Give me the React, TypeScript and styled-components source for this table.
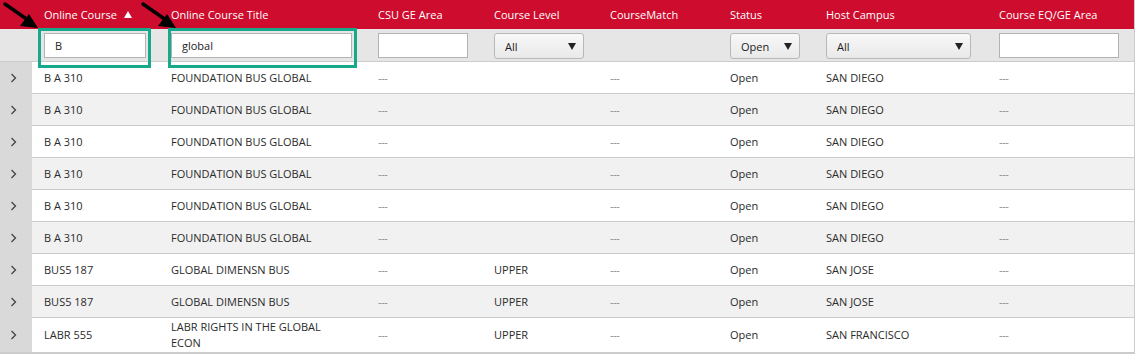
import React from 'react';
import styled, { createGlobalStyle } from 'styled-components';

const GlobalStyle = createGlobalStyle`
  body {
    margin: 0;
    background: #ffffff;
    font-family: 'Open Sans', 'Liberation Sans', Arial, sans-serif;
  }
`;

const colors = {
  red: '#ce0c2e',
  white: '#ffffff',
  text: '#2b2b2b',
  gutter: '#d9d9d9',
  filterBg: '#e6e6e6',
  stripe: '#f1f1f1',
  line: '#cccccc',
  green: '#18a98c',
};

const COLUMNS = '32px 127px 207px 116px 116px 120px 96px 173px 147px';

type Course = {
  code: string;
  title: string;
  geArea: string;
  level: string;
  match: string;
  status: string;
  campus: string;
  eq: string;
};

const courses: Course[] = [
  ...Array.from({ length: 6 }, () => ({
    code: 'B A 310',
    title: 'FOUNDATION BUS GLOBAL',
    geArea: '---',
    level: '',
    match: '---',
    status: 'Open',
    campus: 'SAN DIEGO',
    eq: '---',
  })),
  ...Array.from({ length: 2 }, () => ({
    code: 'BUS5 187',
    title: 'GLOBAL DIMENSN BUS',
    geArea: '---',
    level: 'UPPER',
    match: '---',
    status: 'Open',
    campus: 'SAN JOSE',
    eq: '---',
  })),
  {
    code: 'LABR 555',
    title: 'LABR RIGHTS IN THE GLOBAL ECON',
    geArea: '---',
    level: 'UPPER',
    match: '---',
    status: 'Open',
    campus: 'SAN FRANCISCO',
    eq: '---',
  },
];

const Page = styled.div`
  position: relative;
  width: 1135px;
`;

const Table = styled.div`
  width: 1134px;
  border-right: 1px solid ${colors.line};
  border-bottom: 2px solid ${colors.line};
  font-size: 11px;
  color: ${colors.text};
`;

const HeaderRow = styled.div`
  display: grid;
  grid-template-columns: ${COLUMNS};
  height: 29px;
  background: ${colors.red};
  color: ${colors.white};
  align-items: center;
`;

const HeaderCell = styled.div`
  padding-left: 12px;
  padding-bottom: 1px;
  white-space: nowrap;
  display: flex;
  align-items: center;
  gap: 7px;
`;

const FilterRow = styled.div`
  display: grid;
  grid-template-columns: ${COLUMNS};
  height: 32px;
  background: ${colors.filterBg};
  border-bottom: 1px solid ${colors.line};
  align-items: center;
`;

const FilterCell = styled.div`
  padding-left: 12px;
  display: flex;
  align-items: center;
`;

const TextInput = styled.div<{ $width: number }>`
  box-sizing: border-box;
  width: ${(p) => p.$width}px;
  height: 25px;
  margin-top: 1px;
  background: ${colors.white};
  border: 1px solid #b3b3b3;
  padding-left: 10px;
  display: flex;
  align-items: center;
  font-size: 11px;
  color: #222;
`;

const Select = styled.div<{ $width: number }>`
  box-sizing: border-box;
  width: ${(p) => p.$width}px;
  height: 26px;
  margin-top: 2px;
  border: 1px solid #b8b8b8;
  border-radius: 3px;
  background: linear-gradient(#f8f8f8, #e9e9e9);
  display: flex;
  align-items: center;
  justify-content: space-between;
  padding: 0 7px 0 10px;
  font-size: 11px;
  color: #222;
`;

const Row = styled.div<{ $striped: boolean }>`
  display: grid;
  grid-template-columns: ${COLUMNS};
  min-height: 32px;
  background: ${(p) => (p.$striped ? colors.stripe : colors.white)};
`;

const Gutter = styled.div`
  background: ${colors.gutter};
  display: flex;
  align-items: center;
  padding-left: 10px;
`;

const Cell = styled.div<{ $last: boolean }>`
  display: flex;
  align-items: center;
  padding: ${(p) => (p.$last ? '1px 24px 1px 12px' : '0 24px 0 12px')};
  line-height: 16px;
  border-bottom: ${(p) => (p.$last ? 'none' : `1px solid ${colors.line}`)};
`;

const Dash = styled.span`
  color: #8c8c8c;
  letter-spacing: -0.4px;
  font-size: 11px;
`;

const Highlight = styled.div<{ $left: number; $width: number }>`
  position: absolute;
  top: 28px;
  left: ${(p) => p.$left}px;
  width: ${(p) => p.$width}px;
  height: 40px;
  box-sizing: border-box;
  border: 3px solid ${colors.green};
`;

const Pointer = styled.svg<{ $left: number }>`
  position: absolute;
  top: 2px;
  left: ${(p) => p.$left}px;
`;

const Chevron = () => (
  <svg width="7" height="10" viewBox="0 0 7 10">
    <path d="M1.5 1 L5.5 5 L1.5 9" fill="none" stroke="#444" strokeWidth="1.3" />
  </svg>
);

const Triangle = ({ up, color }: { up?: boolean; color: string }) => (
  <svg width="8" height="7" viewBox="0 0 8 7">
    <path d={up ? 'M0 7 L4 0 L8 7 Z' : 'M0 0 L8 0 L4 7 Z'} fill={color} />
  </svg>
);

const Arrow = ({ left }: { left: number }) => (
  <Pointer $left={left} width="36" height="28" viewBox="0 0 36 28">
    <path d="M2 2 L25 18" stroke="#000" strokeWidth="3.4" strokeLinecap="round" />
    <path d="M35 26 L17 24 L26 12 Z" fill="#000" />
  </Pointer>
);

const value = (v: string) => (v === '---' ? <Dash>---</Dash> : v);

const App = () => {
  const headers = [
    'Online Course',
    'Online Course Title',
    'CSU GE Area',
    'Course Level',
    'CourseMatch',
    'Status',
    'Host Campus',
    'Course EQ/GE Area',
  ];

  return (
    <Page>
      <GlobalStyle />
      <Table>
        <HeaderRow>
          <div />
          {headers.map((h, i) => (
            <HeaderCell key={h}>
              {h}
              {i === 0 && <Triangle up color={colors.white} />}
            </HeaderCell>
          ))}
        </HeaderRow>
        <FilterRow>
          <div />
          <FilterCell>
            <TextInput $width={102}>B</TextInput>
          </FilterCell>
          <FilterCell>
            <TextInput $width={181}>global</TextInput>
          </FilterCell>
          <FilterCell>
            <TextInput $width={90} />
          </FilterCell>
          <FilterCell>
            <Select $width={90}>
              All <Triangle color="#222" />
            </Select>
          </FilterCell>
          <FilterCell />
          <FilterCell>
            <Select $width={70}>
              Open <Triangle color="#222" />
            </Select>
          </FilterCell>
          <FilterCell>
            <Select $width={145}>
              All <Triangle color="#222" />
            </Select>
          </FilterCell>
          <FilterCell>
            <TextInput $width={120} />
          </FilterCell>
        </FilterRow>
        {courses.map((c, i) => {
          const last = i === courses.length - 1;
          return (
            <Row key={i} $striped={i % 2 === 1}>
              <Gutter>
                <Chevron />
              </Gutter>
              <Cell $last={last}>{c.code}</Cell>
              <Cell $last={last}>{c.title}</Cell>
              <Cell $last={last}>{value(c.geArea)}</Cell>
              <Cell $last={last}>{c.level}</Cell>
              <Cell $last={last}>{value(c.match)}</Cell>
              <Cell $last={last}>{c.status}</Cell>
              <Cell $last={last}>{c.campus}</Cell>
              <Cell $last={last}>{value(c.eq)}</Cell>
            </Row>
          );
        })}
      </Table>
      <Highlight $left={38} $width={113} />
      <Highlight $left={168} $width={189} />
      <Arrow left={3} />
      <Arrow left={141} />
    </Page>
  );
};

export default App;
